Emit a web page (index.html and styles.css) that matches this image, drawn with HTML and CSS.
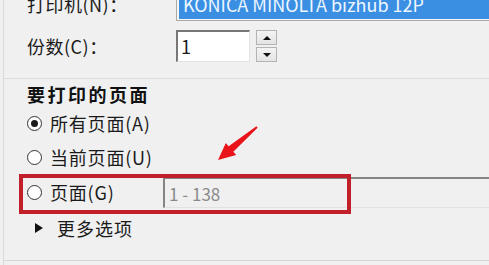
FILE: index.html
```html
<!DOCTYPE html>
<html lang="zh-CN">
<head>
<meta charset="utf-8">
<link rel="stylesheet" href="styles.css">
</head>
<body>
<div class="dialog">
  <section class="top">
    <div class="row printer">
      <span class="lbl">打印机(N)：</span>
      <div class="select"><div class="sel-inner">KONICA MINOLTA bizhub 12P</div></div>
    </div>
    <div class="row copies">
      <span class="lbl">份数(C)：</span>
      <div class="num">1</div>
      <div class="spin">
        <div class="spin-btn"><span class="tri-up"></span></div>
        <div class="spin-btn"><span class="tri-down"></span></div>
      </div>
    </div>
  </section>
  <section class="pages">
    <div class="heading">要打印的页面</div>
    <div class="opt"><span class="radio checked"></span><span>所有页面(A)</span></div>
    <div class="opt"><span class="radio"></span><span>当前页面(U)</span></div>
    <div class="opt range">
      <div class="range-lbl"><span class="radio"></span><span>页面(G)</span></div>
      <div class="range-input">1 - 138</div>
    </div>
    <div class="more"><span class="tri-right"></span><span>更多选项</span></div>
  </section>
  <div class="redbox"></div>
  <svg class="arrow" width="55" height="45" viewBox="0 0 55 45">
    <polygon points="8,38 26.2,33.1 23.3,29.7 47.6,5.8 46.4,4.2 18.7,24.3 15.8,20.9" fill="#e8141a"/>
  </svg>
</div>
</body>
</html>
```
FILE: styles.css
```css
html, body {
  margin: 0;
  padding: 0;
  background: #f0f0f0;
  overflow: hidden;
}
body {
  width: 489px;
  height: 265px;
  font-family: "Noto Sans CJK SC", "Noto Sans", sans-serif;
  font-size: 18px;
  color: #1a1a1a;
}
.dialog {
  position: relative;
  margin-left: 3px;
  border-left: 1px solid #d9d9d9;
  height: 265px;
  display: flex;
  flex-direction: column;
}
.top {
  margin-top: -12px;
  padding-left: 23px;
  padding-bottom: 16px;
  border-bottom: 1px solid #dcdcdc;
  display: flex;
  flex-direction: column;
  gap: 10px;
}
.row {
  display: flex;
  align-items: center;
  height: 32px;
}
.lbl {
  width: 149px;
  flex: none;
  letter-spacing: 0.5px;
}
.select {
  flex: 1;
  height: 30px;
  border: 1px solid #a9a9a9;
  border-right: none;
  padding: 1px 0 1px 2px;
  background: #f7f7f7;
}
.sel-inner {
  height: 100%;
  background: #3a8fe3;
  color: #eef6ff;
  font-size: 18px;
  line-height: 30px;
  padding-left: 4px;
  white-space: nowrap;
  overflow: hidden;
}
.num {
  width: 74px;
  height: 32px;
  box-sizing: border-box;
  border: 1px solid #e2e2e2;
  border-top: 2px solid #777;
  border-left: 2px solid #777;
  background: #fff;
  line-height: 28px;
  padding-left: 3px;
  font-size: 18px;
}
.spin {
  margin-left: 6px;
  display: flex;
  flex-direction: column;
  gap: 2px;
}
.spin-btn {
  width: 19px;
  height: 13px;
  border: 1px solid #b4b4b4;
  background: linear-gradient(#f4f4f4, #e4e4e4);
  display: flex;
  align-items: center;
  justify-content: center;
}
.tri-up {
  width: 0; height: 0;
  border-left: 4px solid transparent;
  border-right: 4px solid transparent;
  border-bottom: 4px solid #111;
}
.tri-down {
  width: 0; height: 0;
  border-left: 4px solid transparent;
  border-right: 4px solid transparent;
  border-top: 4px solid #111;
}
.pages {
  padding: 3px 0 14px 23px;
  border-bottom: 1px solid #d6d6d6;
  display: flex;
  flex-direction: column;
}
.heading {
  height: 24px;
  line-height: 24px;
  font-size: 18px;
  font-weight: 700;
  letter-spacing: 2.5px;
  color: #111;
}
.opt {
  height: 34px;
  display: flex;
  align-items: center;
  gap: 8px;
  letter-spacing: 0.8px;
}
.radio {
  width: 13px;
  height: 13px;
  border: 1px solid #333;
  border-radius: 50%;
  background: #fff;
  flex: none;
  display: flex;
  align-items: center;
  justify-content: center;
}
.radio.checked::after {
  content: "";
  width: 7px;
  height: 7px;
  border-radius: 50%;
  background: #1a1a1a;
}
.opt.range {
  height: 36px;
  gap: 0;
}
.range-lbl {
  width: 136px;
  flex: none;
  display: flex;
  align-items: center;
  gap: 8px;
}
.range-input {
  flex: 1;
  height: 31px;
  box-sizing: border-box;
  border-top: 2px solid #858585;
  border-left: 2px solid #858585;
  border-bottom: 1px solid #e2e2e2;
  color: #8a8a8a;
  line-height: 29px;
  padding-left: 4px;
  font-size: 17px;
  letter-spacing: 0;
}
.more {
  height: 36px;
  display: flex;
  align-items: center;
  padding-left: 8px;
  gap: 14px;
  letter-spacing: 1px;
}
.tri-right {
  width: 0; height: 0;
  border-top: 5px solid transparent;
  border-bottom: 5px solid transparent;
  border-left: 8px solid #111;
}
.redbox {
  position: absolute;
  left: 15px;
  top: 174px;
  width: 324px;
  height: 32px;
  border: 4px solid #c1202b;
}
.arrow {
  position: absolute;
  left: 206px;
  top: 122px;
}
```
